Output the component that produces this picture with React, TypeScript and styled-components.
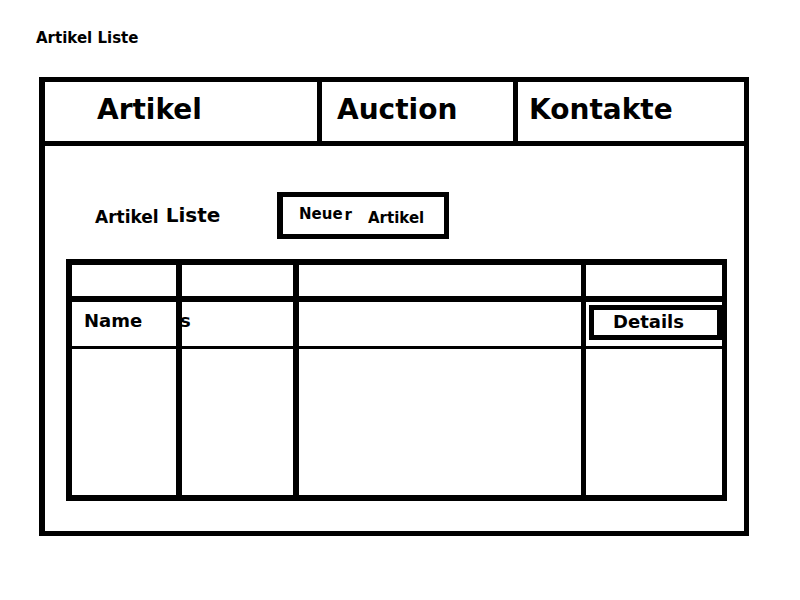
import React from 'react';
import styled, { createGlobalStyle } from 'styled-components';

const GlobalStyle = createGlobalStyle`
  body {
    margin: 0;
    background: #fff;
    color: #000;
    font-family: 'DejaVu Sans', 'Liberation Sans', sans-serif;
    font-weight: bold;
  }
`;

const Page = styled.div`
  width: 800px;
  height: 600px;
  overflow: hidden;
`;

const PageTitle = styled.div`
  margin: 31px 0 0 36px;
  font-size: 15px;
  line-height: 15px;
`;

const Frame = styled.div`
  box-sizing: border-box;
  margin: 31px 0 0 39px;
  width: 710px;
  height: 459px;
  border: 5px solid #000;
  border-left-width: 6px;
`;

const TabBar = styled.div`
  display: flex;
  height: 64px;
  box-sizing: border-box;
  border-bottom: 5px solid #000;
`;

const Tab = styled.div<{ $width?: number; $pad: number; $last?: boolean }>`
  box-sizing: border-box;
  ${(p) => (p.$width ? `width: ${p.$width}px;` : 'flex: 1;')}
  padding: 14px 0 0 ${(p) => p.$pad}px;
  border-right: ${(p) => (p.$last ? 'none' : '5px solid #000')};
  font-size: 28px;
  line-height: 28px;
`;

const Content = styled.div`
  padding: 46px 0 0 21px;
`;

const Toolbar = styled.div`
  display: flex;
  align-items: flex-start;
`;

const SectionTitle = styled.div`
  margin: 13px 0 0 29px;
  width: 182px;
  font-size: 20px;
  line-height: 20px;
`;

const SmallWord = styled.span`
  font-size: 17px;
  vertical-align: -1px;
`;

const NewButton = styled.div`
  box-sizing: border-box;
  display: flex;
  align-items: flex-start;
  width: 172px;
  height: 47px;
  border: 5px solid #000;
  border-left-width: 6px;
  font-size: 15px;
  line-height: 15px;
`;

const ButtonPart = styled.span<{ $top: number; $left: number }>`
  margin: ${(p) => p.$top}px 0 0 ${(p) => p.$left}px;
`;

const Grid = styled.div`
  box-sizing: border-box;
  display: grid;
  grid-template-columns: 110px 117px 287px 136px;
  grid-template-rows: 37px 47px 146px;
  margin-top: 20px;
  width: 661px;
  border: 6px solid #000;
  border-right-width: 5px;
`;

const Cell = styled.div<{ $right: number; $bottom: number }>`
  box-sizing: border-box;
  border-right: ${(p) => p.$right}px solid #000;
  border-bottom: ${(p) => p.$bottom}px solid #000;
  font-size: 18px;
  line-height: 18px;
`;

const CellText = styled.div<{ $left: number }>`
  padding-top: 10px;
  margin-left: ${(p) => p.$left}px;
`;

const DetailsButton = styled.div`
  box-sizing: border-box;
  margin: 3px 0 0 3px;
  width: 133px;
  height: 35px;
  border: 5px solid #000;
  padding: 3px 0 0 19px;
  font-size: 18px;
  line-height: 18px;
`;

const columnBorders = [6, 6, 5, 0];
const rowBorders = [6, 3, 0];

const App: React.FC = () => {
  const renderCell = (row: number, col: number) => {
    let inner: React.ReactNode = null;
    if (row === 1 && col === 0) inner = <CellText $left={12}>Name</CellText>;
    if (row === 1 && col === 1) inner = <CellText $left={-2}>s</CellText>;
    if (row === 1 && col === 3) inner = <DetailsButton>Details</DetailsButton>;
    return (
      <Cell key={`${row}-${col}`} $right={columnBorders[col]} $bottom={rowBorders[row]}>
        {inner}
      </Cell>
    );
  };

  return (
    <Page>
      <GlobalStyle />
      <PageTitle>Artikel Liste</PageTitle>
      <Frame>
        <TabBar>
          <Tab $width={277} $pad={52}>Artikel</Tab>
          <Tab $width={196} $pad={15}>Auction</Tab>
          <Tab $pad={11} $last>Kontakte</Tab>
        </TabBar>
        <Content>
          <Toolbar>
            <SectionTitle>
              <SmallWord>Artikel</SmallWord> Liste
            </SectionTitle>
            <NewButton>
              <ButtonPart $top={10} $left={16}>Neue</ButtonPart>
              <ButtonPart $top={11} $left={2}>r</ButtonPart>
              <ButtonPart $top={14} $left={16}>Artikel</ButtonPart>
            </NewButton>
          </Toolbar>
          <Grid>
            {rowBorders.map((_, row) => columnBorders.map((__, col) => renderCell(row, col)))}
          </Grid>
        </Content>
      </Frame>
    </Page>
  );
};

export default App;
